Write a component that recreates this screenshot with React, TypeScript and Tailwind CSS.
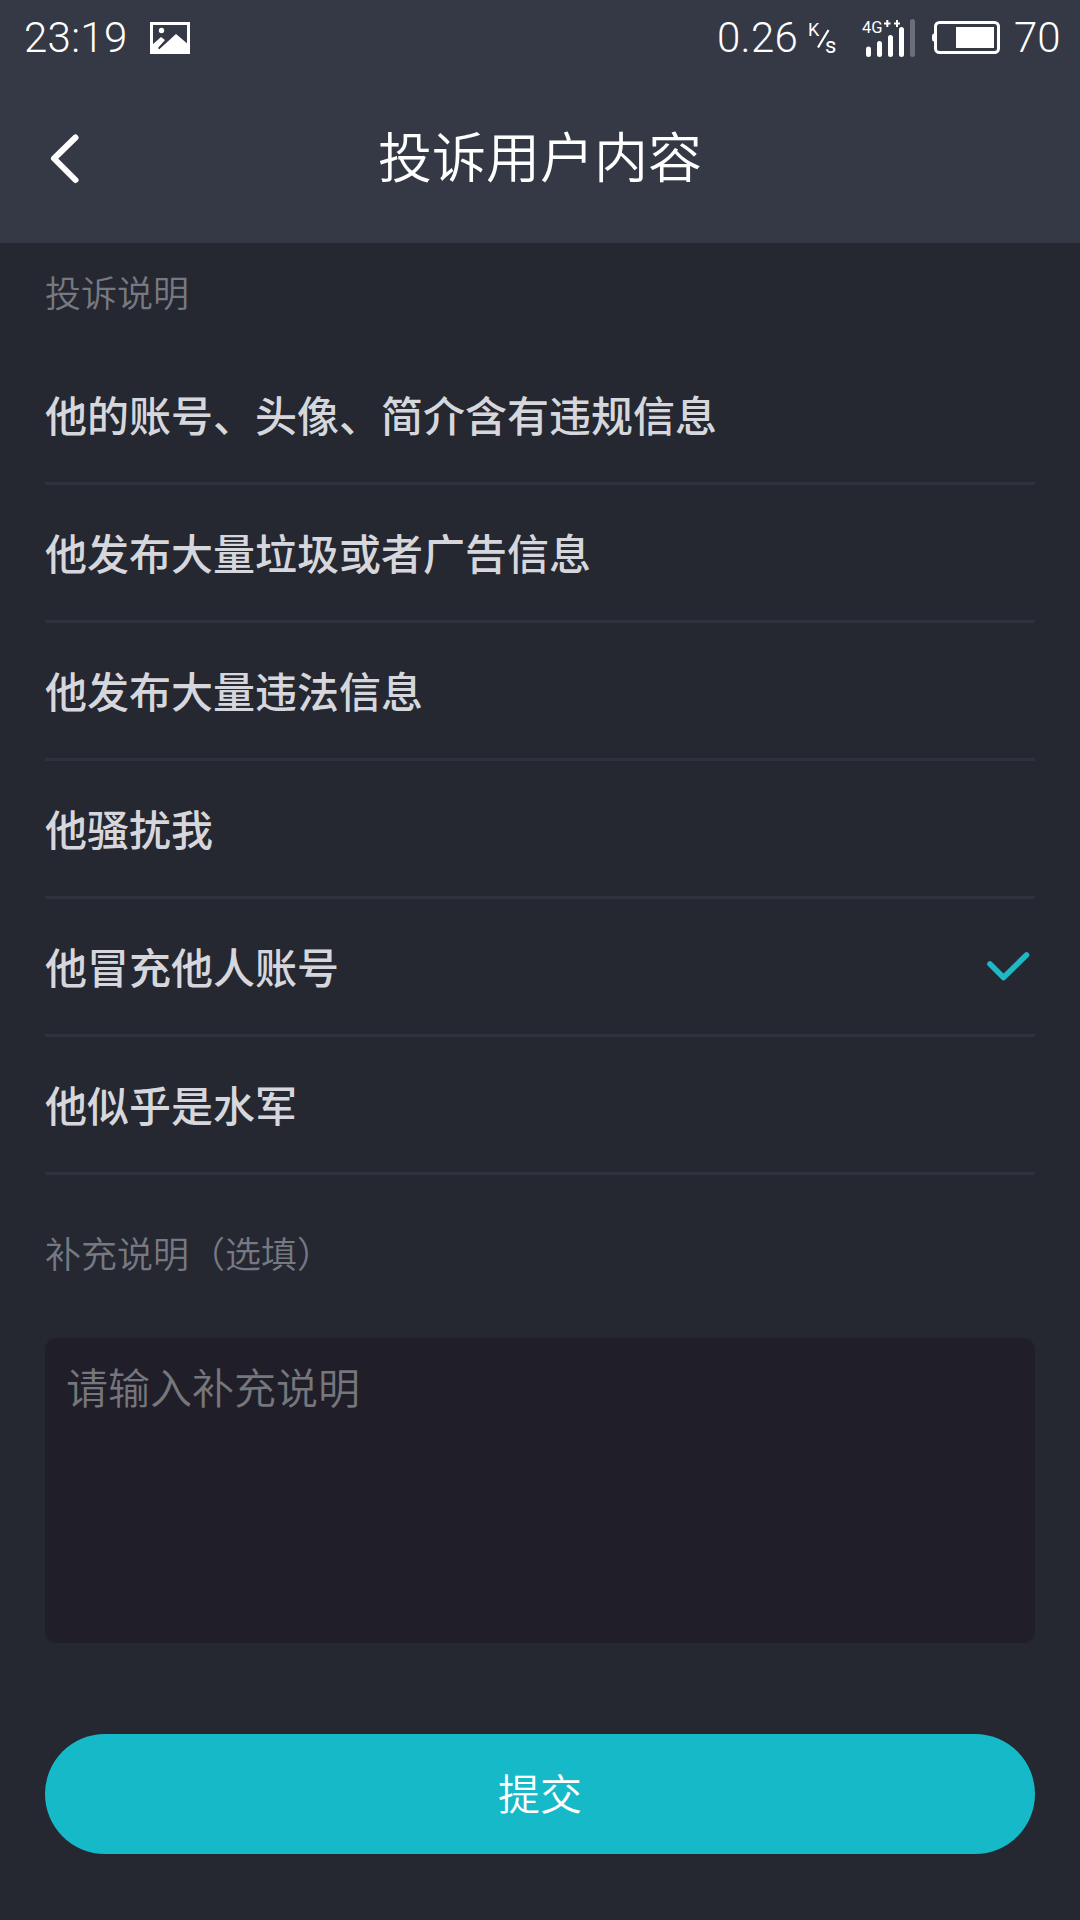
import { useState } from "react";

const reasons = [
  "他的账号、头像、简介含有违规信息",
  "他发布大量垃圾或者广告信息",
  "他发布大量违法信息",
  "他骚扰我",
  "他冒充他人账号",
  "他似乎是水军",
];

const StatusBar = () => (
  <div className="flex h-[75px] items-center justify-between pl-6 pr-[18px] font-['Roboto',sans-serif] text-[42px] font-light leading-none text-white">
    <div className="flex items-center">
      <span className="w-[126px] tracking-[0.3px]">23:19</span>
      <svg width="40" height="32" viewBox="0 0 40 32" fill="none" className="mt-px">
        <rect x="1.5" y="1.5" width="37" height="29" stroke="#fff" strokeWidth="3" />
        <circle cx="11.5" cy="8.5" r="2.7" fill="#fff" />
        <path d="M2 23L11 15L15 18L9 25V27.500L26 12L39 23V31H2Z" fill="#fff" />
        <path d="M8.500 26.500L14.500 20.500" stroke="#343945" strokeWidth="1.600" />
      </svg>
    </div>
    <div className="flex items-center">
      <span className="w-[91px] tracking-[0.3px]">0.26</span>
      <svg width="34" height="44" viewBox="0 -5 34 44" className="font-['Roboto',sans-serif] font-normal">
        <text x="0" y="14.5" fontSize="18" fill="#fff">K</text>
        <path d="M10 26.500L20.500 9" stroke="#fff" strokeWidth="2.200" />
        <text x="17" y="31.5" fontSize="22" fill="#fff">s</text>
      </svg>
      <svg width="54" height="40" viewBox="0 0 54 40" className="ml-5 font-['Roboto',sans-serif] font-normal">
        <text x="0" y="14.5" fontSize="16.5" fill="#fff">4G</text>
        <path d="M22 5.500H28.500M25.300 2V9M32 5.500H38M35 2V9" stroke="#fff" strokeWidth="2" />
        <path d="M6.500 31V36.500M17.500 25.500V36.500M28.500 19.500V36.500M39.500 11.500V36.500" stroke="#fff" strokeWidth="5" strokeLinecap="round" />
        <path d="M50.500 3.500V36.500" stroke="#6b6f79" strokeWidth="5" strokeLinecap="round" />
      </svg>
      <svg width="68" height="34" viewBox="0 0 68 34" fill="none" className="ml-4">
        <rect x="3.500" y="1.500" width="63" height="30" rx="4" stroke="#fff" strokeWidth="3" />
        <path d="M3 12.500H2Q0 12.500 0 15V18Q0 20.500 2 20.500H3Z" fill="#fff" />
        <rect x="24" y="6" width="38" height="21" fill="#fff" />
      </svg>
      <span className="ml-[14px] w-[48px]">70</span>
    </div>
  </div>
);

const Header = () => (
  <header className="h-[243px] bg-[#343945]">
    <StatusBar />
    <div className="flex h-[168px] items-start justify-between px-12 text-white">
      <button type="button" aria-label="返回" className="pt-[57px]">
        <svg width="34" height="54" viewBox="0 0 34 54" fill="none">
          <path d="M27.500 5.500L6 26.500L27.500 48" stroke="#fff" strokeWidth="6" strokeLinecap="round" strokeLinejoin="round" />
        </svg>
      </button>
      <h1 className="mt-[45px] text-[54px] font-[350] leading-[80px]">投诉用户内容</h1>
      <div className="w-[34px]" />
    </div>
  </header>
);

export default function App() {
  const [selected, setSelected] = useState(4);

  return (
    <div className="flex h-[1920px] w-[1080px] flex-col bg-[#252731] font-['Roboto','Noto_Sans_CJK_SC',sans-serif]">
      <Header />
      <main className="px-[45px]">
        <h2 className="h-[104px] pt-[26px] text-[36px] font-[350] leading-[52px] text-[#777982]">投诉说明</h2>
        <ul>
          {reasons.map((reason, index) => (
            <li
              key={reason}
              onClick={() => setSelected(index)}
              className="flex h-[138px] items-center justify-between border-b-[3px] border-[#2f313c] text-[42px] font-medium text-[#d6d7dc]"
            >
              <span className="pt-[5px]">{reason}</span>
              {index === selected && (
                <svg width="54" height="40" viewBox="0 0 54 40" fill="none" className="mt-0.5">
                  <path d="M9 16L22.500 29.500L45.500 7" stroke="#1cb9c6" strokeWidth="5.600" strokeLinecap="round" strokeLinejoin="round" />
                </svg>
              )}
            </li>
          ))}
        </ul>
        <h2 className="mt-[55px] text-[36px] font-[350] leading-[52px] text-[#777982]">补充说明（选填）</h2>
        <textarea
          placeholder="请输入补充说明"
          className="mt-[56px] block h-[305px] w-full resize-none rounded-[12px] bg-[#201f29] px-[21px] pt-[21px] text-[42px] font-[350] leading-[62px] text-[#d6d7dc] outline-none placeholder:text-[#76767d]"
        />
        <button
          type="button"
          className="mt-[91px] flex h-[120px] w-full items-center justify-center rounded-full bg-[#15b9c8] pt-[3px] text-[42px] font-[350] text-white"
        >
          提交
        </button>
      </main>
    </div>
  );
}
